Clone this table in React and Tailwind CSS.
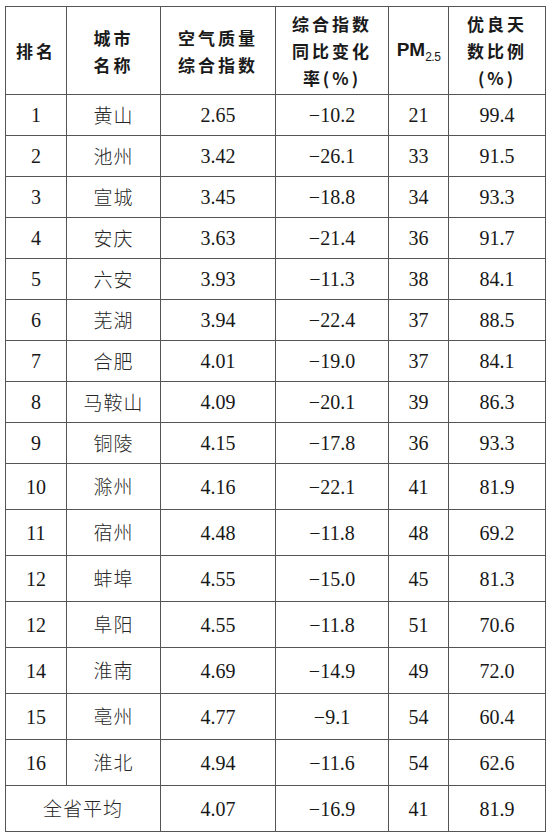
import React from "react";

const rows = [
  ["1", "黄山", "2.65", "−10.2", "21", "99.4"],
  ["2", "池州", "3.42", "−26.1", "33", "91.5"],
  ["3", "宣城", "3.45", "−18.8", "34", "93.3"],
  ["4", "安庆", "3.63", "−21.4", "36", "91.7"],
  ["5", "六安", "3.93", "−11.3", "38", "84.1"],
  ["6", "芜湖", "3.94", "−22.4", "37", "88.5"],
  ["7", "合肥", "4.01", "−19.0", "37", "84.1"],
  ["8", "马鞍山", "4.09", "−20.1", "39", "86.3"],
  ["9", "铜陵", "4.15", "−17.8", "36", "93.3"],
  ["10", "滁州", "4.16", "−22.1", "41", "81.9"],
  ["11", "宿州", "4.48", "−11.8", "48", "69.2"],
  ["12", "蚌埠", "4.55", "−15.0", "45", "81.3"],
  ["12", "阜阳", "4.55", "−11.8", "51", "70.6"],
  ["14", "淮南", "4.69", "−14.9", "49", "72.0"],
  ["15", "亳州", "4.77", "−9.1", "54", "60.4"],
  ["16", "淮北", "4.94", "−11.6", "54", "62.6"],
];

const serif = "font-['Liberation_Serif','Noto_Sans_CJK_SC',serif]";
const cjk = "font-['Noto_Sans_CJK_SC',sans-serif]";
const cell = "border-[1.5px] border-[#555] text-center align-middle p-0";
const head = `${cell} ${cjk} font-bold text-[17px] leading-[27px] tracking-[3px] text-[#1a1a1a]`;
const num = `${cell} ${serif} text-[20px] text-[#181818]`;
const city = `${cell} ${cjk} font-light text-[19px] tracking-[1px] text-[#262626]`;

export default function App() {
  return (
    <div className="bg-white w-[550px] h-[838px] pt-[6px] pl-[5px]">
      <table className="table-fixed border-collapse w-[540px] text-[#1f1f1f]">
        <colgroup>
          <col className="w-[61px]" />
          <col className="w-[94px]" />
          <col className="w-[115px]" />
          <col className="w-[113px]" />
          <col className="w-[60px]" />
          <col className="w-[97px]" />
        </colgroup>
        <thead>
          <tr className="h-[88px]">
            <th className={head}>排名</th>
            <th className={head}>
              城市
              <br />
              名称
            </th>
            <th className={head}>
              空气质量
              <br />
              综合指数
            </th>
            <th className={head}>
              综合指数
              <br />
              同比变化
              <br />
              率(%)
            </th>
            <th className={`${cell} font-['Liberation_Sans',sans-serif] font-bold text-[19px] text-[#1a1a1a]`}>
              PM<sub className="text-[12px] font-normal tracking-[-0.5px] align-[-2px]">2.5</sub>
            </th>
            <th className={head}>
              优良天
              <br />
              数比例
              <br />
              (%)
            </th>
          </tr>
        </thead>
        <tbody>
          {rows.map((r, i) => (
            <tr key={i} className={i < 9 ? "h-[41px]" : "h-[46px]"}>
              <td className={num}>{r[0]}</td>
              <td className={city}>{r[1]}</td>
              <td className={num}>{r[2]}</td>
              <td className={num}>{r[3]}</td>
              <td className={num}>{r[4]}</td>
              <td className={num}>{r[5]}</td>
            </tr>
          ))}
          <tr className="h-[46px]">
            <td colSpan={2} className={city}>
              全省平均
            </td>
            <td className={num}>4.07</td>
            <td className={num}>−16.9</td>
            <td className={num}>41</td>
            <td className={num}>81.9</td>
          </tr>
        </tbody>
      </table>
    </div>
  );
}
